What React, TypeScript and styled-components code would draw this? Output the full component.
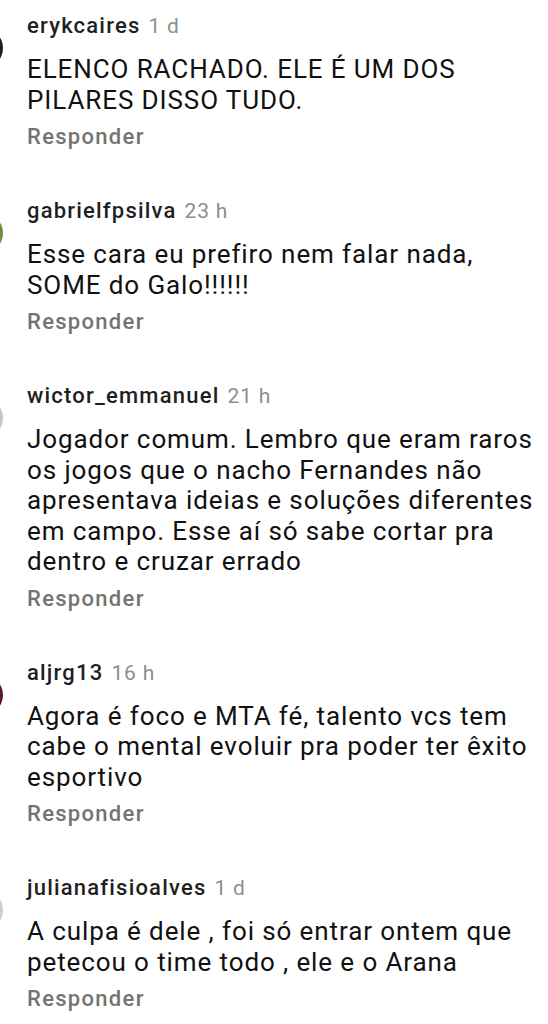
import React from "react";
import styled, { createGlobalStyle } from "styled-components";

const GlobalStyle = createGlobalStyle`
  html, body { margin: 0; padding: 0; background: #ffffff; }
  body { font-family: Roboto, "Noto Sans", sans-serif; overflow: hidden; }
`;

const List = styled.div`
  display: flex;
  flex-direction: column;
  gap: 46px;
  padding: 12px 0 0 0;
  width: 548px;
  height: 1024px;
  overflow: hidden;
  box-sizing: border-box;
`;

const Comment = styled.div`
  display: flex;
  align-items: flex-start;
  gap: 24px;
`;

const Avatar = styled.div<{ $bg: string }>`
  flex: 0 0 40px;
  width: 40px;
  height: 40px;
  margin-left: -37px;
  margin-top: 16px;
  border-radius: 50%;
  background: ${(p) => p.$bg};
`;

const Body = styled.div`
  display: flex;
  flex-direction: column;
  min-width: 0;
  flex: 1;
`;

const Header = styled.div`
  display: flex;
  align-items: baseline;
  gap: 8px;
  line-height: 28px;
  height: 28px;
  margin-bottom: 14px;
  white-space: nowrap;
`;

const User = styled.span`
  font-size: 22px;
  font-weight: 500;
  color: #1f1f1f;
  letter-spacing: 1.2px;
`;

const Time = styled.span`
  font-size: 21px;
  font-weight: 400;
  color: #8e8e8e;
  letter-spacing: 0.8px;
`;

const Text = styled.div`
  font-size: 26px;
  line-height: 30.5px;
  color: #111111;
  letter-spacing: 0.9px;
  white-space: nowrap;
`;

const Reply = styled.div`
  margin-top: 8px;
  font-size: 22px;
  line-height: 28px;
  font-weight: 500;
  color: #737373;
  letter-spacing: 1.3px;
`;

const comments = [
  {
    user: "erykcaires",
    time: "1 d",
    avatar: "#1e1e1e",
    lines: ["ELENCO RACHADO. ELE É UM DOS", "PILARES DISSO TUDO."],
  },
  {
    user: "gabrielfpsilva",
    time: "23 h",
    avatar: "#6f8d3c",
    lines: ["Esse cara eu prefiro nem falar nada,", "SOME do Galo!!!!!!"],
  },
  {
    user: "wictor_emmanuel",
    time: "21 h",
    avatar: "#c9c6c0",
    lines: [
      "Jogador comum. Lembro que eram raros",
      "os jogos que o nacho Fernandes não",
      "apresentava ideias e soluções diferentes",
      "em campo. Esse aí só sabe cortar pra",
      "dentro e cruzar errado",
    ],
  },
  {
    user: "aljrg13",
    time: "16 h",
    avatar: "#5a1a28",
    lines: [
      "Agora é foco e MTA fé, talento vcs tem",
      "cabe o mental evoluir pra poder ter êxito",
      "esportivo",
    ],
  },
  {
    user: "julianafisioalves",
    time: "1 d",
    avatar: "#d6cdbf",
    lines: [
      "A culpa é dele , foi só entrar ontem que",
      "petecou o time todo , ele e o Arana",
    ],
  },
];

export default function App() {
  return (
    <>
      <GlobalStyle />
      <List>
        {comments.map((c) => (
          <Comment key={c.user}>
            <Avatar $bg={c.avatar} />
            <Body>
              <Header>
                <User>{c.user}</User>
                <Time>{c.time}</Time>
              </Header>
              <Text>
                {c.lines.map((l, i) => (
                  <div key={i}>{l}</div>
                ))}
              </Text>
              <Reply>Responder</Reply>
            </Body>
          </Comment>
        ))}
      </List>
    </>
  );
}
